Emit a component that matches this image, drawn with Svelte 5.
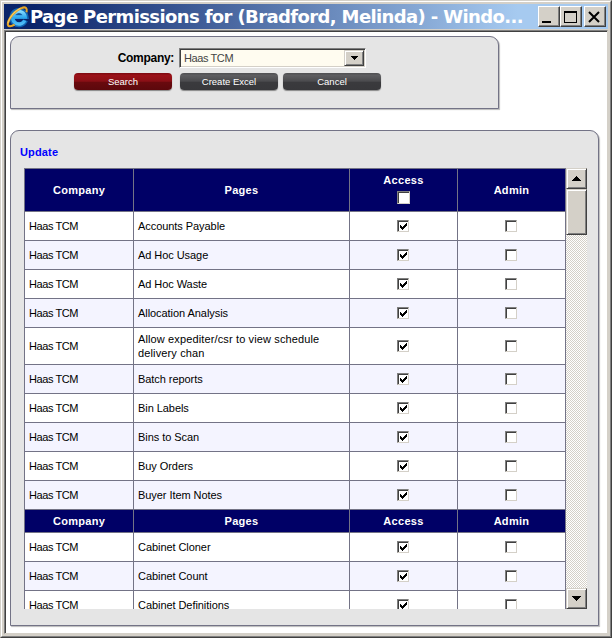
<script>
  const rows = [
    { page: 'Accounts Payable' },
    { page: 'Ad Hoc Usage' },
    { page: 'Ad Hoc Waste' },
    { page: 'Allocation Analysis' },
    { page: 'Allow expediter/csr to view schedule delivery chan', tall: true },
    { page: 'Batch reports' },
    { page: 'Bin Labels' },
    { page: 'Bins to Scan' },
    { page: 'Buy Orders' },
    { page: 'Buyer Item Notes' },
    { header: true },
    { page: 'Cabinet Cloner' },
    { page: 'Cabinet Count', alt: true },
    { page: 'Cabinet Definitions' }
  ].map((r, i) => ({ ...r, alt: i < 10 ? i % 2 === 1 : !!r.alt }));
</script>

{#snippet box(checked)}
  <span class="box">
    {#if checked}
      <svg width="7" height="7" viewBox="0 0 7 7" shape-rendering="crispEdges"><path d="M0 2h1v1h1v1h1v-1h1v-1h1v-1h1v-1h1v3h-1v1h-1v1h-1v1h-1v1h-1v-1h-1v-1h-1z" fill="#000" /></svg>
    {/if}
  </span>
{/snippet}

<div class="window">
  <div class="frame">
    <div class="titlebar">
      <svg class="ie" width="23" height="24" viewBox="0 0 24 24">
        <defs><linearGradient id="blue" x1="0" y1="0" x2="0" y2="1"><stop offset="0" stop-color="#7fd8ff" /><stop offset=".5" stop-color="#28a5ee" /><stop offset="1" stop-color="#52bdf6" /></linearGradient></defs>
        <path d="M20.5 15.5A7.5 7.5 0 1 1 21 11.5H8.500" fill="none" stroke="#1267b5" stroke-width="5" />
        <path d="M19.500 15.5A6.500 6.500 0 1 1 20 12H8" fill="none" stroke="url(#blue)" stroke-width="3.600" />
        <path d="M21.500 7C22.500 3 20.500 1 16.500 2.500C10 4.500 3 13 2 18.500C1.300 22.500 5 22.500 9 20" fill="none" stroke="#e5a528" stroke-width="2.200" />
        <path d="M15 3C8.500 6 3 13.500 2 18.500" fill="none" stroke="#ffdf7b" stroke-width=".8" />
      </svg>
      <span class="title">Page Permissions for (Bradford, Melinda) - Windo...</span>
      <div class="controls">
        <span class="ctl"><svg width="18" height="17" shape-rendering="crispEdges"><path d="M3 14h9v2H3z" /></svg></span>
        <span class="ctl"><svg width="18" height="17" shape-rendering="crispEdges"><path fill-rule="evenodd" d="M3 4h13v12H3zM4 6v9h11V6z" /></svg></span>
        <span class="ctl close"><svg width="18" height="17"><path d="M4 5L14 15M14 5L4 15" stroke="#000" stroke-width="2" /></svg></span>
      </div>
    </div>
    <div class="content">
      <section class="panel search">
        <div class="field">
          <label for="company">Company:</label>
          <div class="select" id="company"><span>Haas TCM</span><i><svg width="7" height="4" shape-rendering="crispEdges"><path d="M0 0h7v1H6v1H5v1H4v1H3V3H2V2H1V1H0z" /></svg></i></div>
        </div>
        <div class="buttons">
          <button class="red">Search</button>
          <button>Create Excel</button>
          <button>Cancel</button>
        </div>
      </section>
      <section class="panel results">
        <div class="update">Update</div>
        <div class="scroller">
          <div class="grid">
            <div class="row head first">
              <div>Company</div><div>Pages</div><div class="stack"><span>Access</span>{@render box(false)}</div><div>Admin</div>
            </div>
            {#each rows as r}
              {#if r.header}
                <div class="row head"><div>Company</div><div>Pages</div><div>Access</div><div>Admin</div></div>
              {:else}
                <div class="row" class:alt={r.alt} class:tall={r.tall}>
                  <div class="co">Haas TCM</div><div class="pg"><span>{r.page}</span></div>
                  <div class="c">{@render box(true)}</div><div class="c">{@render box(false)}</div>
                </div>
              {/if}
            {/each}
          </div>
          <div class="bar">
            <span class="sb"><svg width="9" height="5" shape-rendering="crispEdges"><path d="M4 0h1v1h1v1h1v1h1v1h1v1H0V4h1V3h1V2h1V1h1z" /></svg></span>
            <span class="sb thumb"></span>
            <span class="sb end"><svg width="9" height="5" shape-rendering="crispEdges"><path d="M0 0h9v1H8v1H7v1H6v1H5v1H4V4H3V3H2V2H1V1H0z" /></svg></span>
          </div>
        </div>
      </section>
    </div>
  </div>
</div>

<style>
  .window, .window * { box-sizing: border-box; }
  .window {
    width: 612px; height: 638px; background: #d4d0c8; overflow: hidden;
    border: 1px solid; border-color: #d4d0c8 #404040 #404040 #d4d0c8;
    font: 11px "Liberation Sans", Arial, sans-serif; color: #000;
  }
  .frame {
    height: 636px; padding: 2px; display: flex; flex-direction: column;
    border: 1px solid; border-color: #fff #808080 #808080 #fff;
  }
  .titlebar {
    height: 25px; flex: none; display: flex; align-items: center;
    background: linear-gradient(90deg, #0a246a 0, #0a246a 5%, #a6caf0 85%, #a6caf0);
  }
  .ie { flex: none; margin-left: 2px; }
  .title {
    font: bold 18px/25px "DejaVu Sans", Verdana, sans-serif; color: #fff; white-space: nowrap;
    width: 506px; margin-left: 1px; letter-spacing: -.62px;
  }
  .controls { display: flex; margin-left: auto; padding-right: 2px; }
  .ctl {
    width: 22px; height: 21px; background: #d4d0c8; border: 1px solid; border-color: #fff #404040 #404040 #fff;
    box-shadow: inset -1px -1px #808080;
  }
  .ctl svg { display: block; }
  .close { margin-left: 2px; }
  .content {
    flex: 1; margin-top: 1px; padding: 4px 0 0 4px; background: #fff;
    border: 1px solid; border-color: #808080 #d4d0c8 #d4d0c8 #808080;
    box-shadow: inset 1px 1px #404040;
  }
  .panel {
    background: #e5e5e5; border: 1px solid #737386; border-radius: 9px 9px 0 0; box-shadow: 1px 1px 1px #bbb;
  }
  .search { width: 489px; height: 73px; margin: 1px 0 0 1px; padding-top: 11px; }
  .field { display: flex; height: 20px; align-items: center; }
  .field label { width: 163px; text-align: right; font-weight: bold; font-size: 12px; margin-right: 5px; line-height: 20px; letter-spacing: -.3px; }
  .select {
    width: 187px; height: 20px; background: #fffcf0; display: flex; align-items: center; justify-content: space-between;
    border: 1px solid; border-color: #808080 #fff #fff #808080; box-shadow: inset 1px 1px #404040, inset -1px -1px #d4d0c8;
    padding: 1px 1px 1px 4px; color: #444; letter-spacing: -.4px;
  }
  .select i {
    width: 20px; height: 16px; background: #d4d0c8; display: grid; place-items: center;
    border: 1px solid; border-color: #d4d0c8 #404040 #404040 #d4d0c8; box-shadow: inset 1px 1px #fff, inset -1px -1px #808080;
  }
  .buttons { display: flex; gap: 5px; padding: 5px 0 0 63px; }
  button {
    width: 98px; height: 17px; padding: 0; border: 0; border-radius: 4px; color: #fff;
    font: 9.5px/17px "Liberation Sans", Arial, sans-serif; box-shadow: 0 1px 1px #888;
    background: linear-gradient(#505052, #5d5d60 15%, #4b4b4e 48%, #3a3a3d 55%, #38383b);
  }
  .red { background: linear-gradient(#7c0a10, #9b1118 15%, #8b1016 48%, #690a0e 55%, #5c080c); margin-right: 3px; }
  .results { width: 589px; height: 496px; margin: 21px 0 0 1px; padding: 13px 0 0 9px; }
  .update { color: #00f; font-weight: bold; height: 24px; line-height: 17px; font-size: 11px; letter-spacing: .15px; }
  .scroller { margin-left: 4px; width: 563px; height: 441px; display: flex; overflow: hidden; }
  .grid { width: 542px; border-left: 1px solid #737386; border-top: 1px solid #737386; }
  .row { display: grid; grid-template-columns: 109px 216px 108px 108px; height: 29px; background: #fff; }
  .row > div { border-right: 1px solid #737386; border-bottom: 1px solid #737386; display: flex; align-items: center; }
  .alt { background: #f4f4ff; }
  .tall { height: 37px; line-height: 14px; }
  .row .co { padding-left: 4px; letter-spacing: -.42px; }
  .row .pg { padding: 0 20px 0 4px; letter-spacing: -.06px; }
  .tall .pg { letter-spacing: .13px; }
  .row .c { justify-content: center; padding-right: 2px; }
  .row.head { height: 23px; background: #006; color: #fff; font-weight: bold; letter-spacing: .3px; }
  .row.head > div { justify-content: center; }
  .row.first { height: 43px; }
  .row.head .stack { flex-direction: column; justify-content: flex-start; line-height: 15px; gap: 3px; padding-top: 4px; }
  .stack .box { width: 13px; height: 13px; }
  .box {
    width: 12px; height: 12px; background: #fff; display: block; padding: 2px 0 0 2px;
    border: 1px solid; border-color: #808080 #d4d0c8 #d4d0c8 #808080; box-shadow: inset 1px 1px #404040;
  }
  .box svg { display: block; }
  .bar {
    width: 21px; display: flex; flex-direction: column;
    background: repeating-conic-gradient(#fff 0 25%, #d4d0c8 0 50%) 0 0 / 2px 2px;
  }
  .sb {
    width: 21px; height: 21px; background: #d4d0c8; display: grid; place-items: center; flex: none;
    border: 1px solid; border-color: #d4d0c8 #404040 #404040 #d4d0c8; box-shadow: inset 1px 1px #fff, inset -1px -1px #808080;
  }
  .thumb { height: 46px; }
  .end { margin-top: auto; }
</style>
